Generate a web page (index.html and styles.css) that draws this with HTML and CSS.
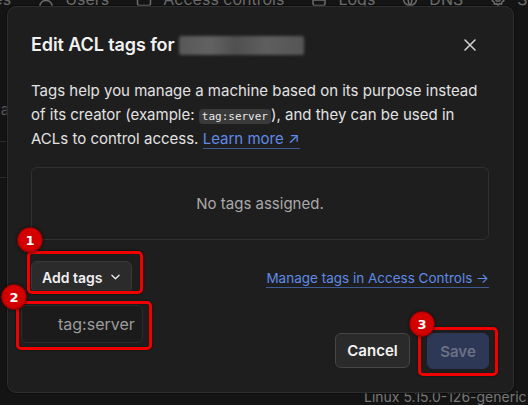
FILE: index.html
```html
<!DOCTYPE html>
<html>
<head>
<meta charset="utf-8">
<link rel="stylesheet" href="styles.css">
</head>
<body>
<div class="page">
  <nav class="nav">
    <span class="nav-item">Machines</span>
    <span class="nav-item">
      <svg class="nav-icon" viewBox="0 0 16 16" fill="none" stroke="currentColor" stroke-width="1.5"><circle cx="8" cy="5" r="3.2"/><path d="M2 15c0-3.2 2.7-5.5 6-5.5s6 2.3 6 5.5"/></svg>
      Users
    </span>
    <span class="nav-item">
      <svg class="nav-icon" viewBox="0 0 16 16" fill="none" stroke="currentColor" stroke-width="1.5"><rect x="1.5" y="1.5" width="13" height="13" rx="2"/></svg>
      Access controls
    </span>
    <span class="nav-item">
      <svg class="nav-icon" viewBox="0 0 16 16" fill="none" stroke="currentColor" stroke-width="1.5"><rect x="2" y="1.5" width="12" height="13" rx="2"/><path d="M2 9h12M2 5h12"/></svg>
      Logs
    </span>
    <span class="nav-item">
      <svg class="nav-icon" viewBox="0 0 16 16" fill="none" stroke="currentColor" stroke-width="1.5"><circle cx="8" cy="8" r="6.5"/><path d="M8 1.5c-2.5 2.5-2.5 10.5 0 13M8 1.5c2.5 2.5 2.5 10.5 0 13M1.5 8h13"/></svg>
      DNS
    </span>
    <span class="nav-item">
      <svg class="nav-icon" viewBox="0 0 16 16" fill="none" stroke="currentColor" stroke-width="1.5"><circle cx="8" cy="8" r="2.3"/><path d="M8 1.5l1.3 1.8 2.2-.5.5 2.2 1.8 1.3-1.1 1.7 1.1 1.7-1.8 1.3-.5 2.2-2.2-.5L8 14.5l-1.3-1.8-2.2.5-.5-2.2-1.8-1.3L3.3 8 2.2 6.3 4 5l.5-2.2 2.2.5z"/></svg>
      Settings
    </span>
  </nav>
  <div class="side">
    <span class="side-text">ca</span>
    <div class="side-line"></div>
    <div class="side-line second"></div>
  </div>
  <div class="footer-text">Linux 5.15.0-126-generic</div>
</div>

<div class="dialog">
  <div class="dialog-header">
    <h2 class="dialog-title">Edit ACL tags for <span class="blurred"></span></h2>
    <button class="close-btn" aria-label="Close">
      <svg viewBox="0 0 12 12" width="12" height="12" fill="none" stroke="currentColor" stroke-width="1.6" stroke-linecap="round"><path d="M1 1l10 10M11 1L1 11"/></svg>
    </button>
  </div>
  <p class="dialog-text">Tags help you manage a machine based on its purpose instead of its creator (example: <code class="code">tag:server</code>), and they can be used in ACLs to control access. <a class="link" href="#">Learn more ↗</a></p>
  <div class="empty-box">No tags assigned.</div>
  <div class="tag-row">
    <button class="btn add-btn">Add tags
      <svg viewBox="0 0 10 6" width="9" height="6" fill="none" stroke="currentColor" stroke-width="1.4" stroke-linecap="round" stroke-linejoin="round"><path d="M1 1l4 4 4-4"/></svg>
    </button>
    <a class="link link-sm" href="#">Manage tags in Access Controls →</a>
  </div>
  <div class="dialog-footer">
    <button class="btn cancel-btn">Cancel</button>
    <button class="btn save-btn">Save</button>
  </div>
</div>

<div class="dropdown">tag:server</div>

<div class="mark box1"></div>
<div class="mark box2"></div>
<div class="mark box3"></div>
<div class="badge badge1">1</div>
<div class="badge badge2">2</div>
<div class="badge badge3">3</div>
</body>
</html>
```

FILE: styles.css
```css
* { box-sizing: border-box; }
html, body {
  margin: 0;
  padding: 0;
  width: 528px;
  height: 405px;
  overflow: hidden;
  background: #141414;
  font-family: Inter, "Noto Sans", sans-serif;
}
.page {
  position: relative;
  width: 528px;
  height: 405px;
}
.nav {
  display: flex;
  gap: 27px;
  margin-top: -11px;
  margin-left: -62px;
  font-size: 16px;
  line-height: 20px;
  color: #6b6b6b;
  white-space: nowrap;
}
.nav-item {
  display: flex;
  align-items: center;
  gap: 11px;
}
.nav-icon {
  width: 16px;
  height: 16px;
  flex: none;
}
.side {
  position: absolute;
  left: 0;
  top: 112px;
  width: 8px;
}
.side-text {
  display: block;
  margin-left: -8px;
  font-size: 15px;
  line-height: 18px;
  color: #555;
}
.side-line {
  margin-top: 22px;
  height: 1px;
  background: #2a2a2a;
}
.side-line.second { margin-top: 35px; }
.footer-text {
  position: absolute;
  left: 364px;
  top: 399px;
  font-size: 14px;
  line-height: 18px;
  color: #777;
  white-space: nowrap;
}
.dialog {
  position: absolute;
  left: 7px;
  top: 6px;
  width: 507px;
  background: #1e1e1e;
  border: 1px solid #2e2e2e;
  border-radius: 9px;
  padding: 26px 24px 23px 23px;
  box-shadow: 0 0 0 1px rgba(0,0,0,0.3);
}
.dialog-header {
  display: flex;
  align-items: center;
  justify-content: space-between;
  height: 24px;
}
.dialog-title {
  margin: 0;
  font-size: 18px;
  font-weight: 600;
  color: #f2f2f2;
  line-height: 24px;
  display: flex;
  align-items: center;
  letter-spacing: -0.1px;
}
.blurred {
  display: inline-block;
  width: 125px;
  height: 19px;
  margin-left: 4px;
  background: linear-gradient(90deg, #575757, #626262 25%, #505050 45%, #5e5e5e 70%, #555 100%);
  filter: blur(1.5px);
  border-radius: 2px;
}
.close-btn {
  width: 24px;
  height: 24px;
  margin-right: 7px;
  padding: 0;
  border: 0;
  background: none;
  color: #d0d0d0;
  display: flex;
  align-items: center;
  justify-content: center;
}
.dialog-text {
  margin: 22px 0 0;
  font-size: 15px;
  line-height: 24px;
  color: #e2e2e2;
}
.code {
  font-family: "DejaVu Sans Mono", "Liberation Mono", monospace;
  font-size: 11px;
  line-height: 1;
  background: #3a3a3a;
  color: #e6e6e6;
  padding: 1px 3px;
  border-radius: 4px;
}
.link {
  color: #5f8ae6;
  text-decoration: none;
  border-bottom: 1px solid #3f5a93;
}
.empty-box {
  margin-top: 16px;
  height: 73px;
  border: 1px solid #303030;
  border-radius: 6px;
  display: flex;
  align-items: center;
  justify-content: center;
  font-size: 15px;
  color: #a9a9a9;
}
.tag-row {
  margin-top: 21px;
  display: flex;
  align-items: center;
  justify-content: space-between;
}
.btn {
  font-family: Inter, "Noto Sans", sans-serif;
  font-weight: 600;
  border-radius: 6px;
  cursor: pointer;
}
.add-btn {
  height: 32px;
  width: 101px;
  padding: 0 0 0 10px;
  display: flex;
  align-items: center;
  gap: 9px;
  font-size: 14px;
  color: #f0f0f0;
  background: #2b2b2b;
  border: 1px solid #393939;
}
.link-sm {
  font-size: 13.5px;
  line-height: 18px;
  margin-top: 2px;
}
.dialog-footer {
  margin-top: 40px;
  display: flex;
  justify-content: flex-end;
  gap: 17px;
}
.cancel-btn {
  height: 35px;
  width: 75px;
  font-size: 15px;
  color: #f2f2f2;
  background: #2a2a2a;
  border: 1px solid #454545;
}
.save-btn {
  height: 36px;
  width: 62px;
  font-size: 15px;
  color: #6b7183;
  background: #2d3857;
  border: 1px solid #2d3857;
}
.dropdown {
  position: absolute;
  left: 21px;
  top: 305px;
  width: 122px;
  height: 38px;
  background: #1b1b1b;
  border: 1px solid #2b2b2b;
  border-radius: 6px;
  font-size: 16px;
  color: #9c9c9c;
  display: flex;
  align-items: center;
  padding-left: 36px;
}
.mark {
  position: absolute;
  border: 3px solid #f20000;
  border-radius: 5px;
  box-shadow: 0 0 2px rgba(0,0,0,0.8), inset 0 0 1px rgba(0,0,0,0.6);
}
.box1 { left: 27px; top: 251px; width: 116px; height: 43px; }
.box2 { left: 16px; top: 301px; width: 136px; height: 49px; }
.box3 { left: 418px; top: 327px; width: 80px; height: 49px; }
.badge {
  position: absolute;
  width: 26px;
  height: 26px;
  border-radius: 50%;
  background: radial-gradient(circle at 50% 45%, #d40000 55%, #a00000 100%);
  border: 1.5px solid #8a0000;
  box-shadow: 0 0 3px rgba(0,0,0,0.6);
  color: #fff;
  font-family: "DejaVu Sans", sans-serif;
  font-weight: 700;
  font-size: 13px;
  display: flex;
  align-items: center;
  justify-content: center;
}
.badge1 { left: 17px; top: 227px; }
.badge2 { left: 1px; top: 284px; }
.badge3 { left: 409px; top: 311px; }
```
